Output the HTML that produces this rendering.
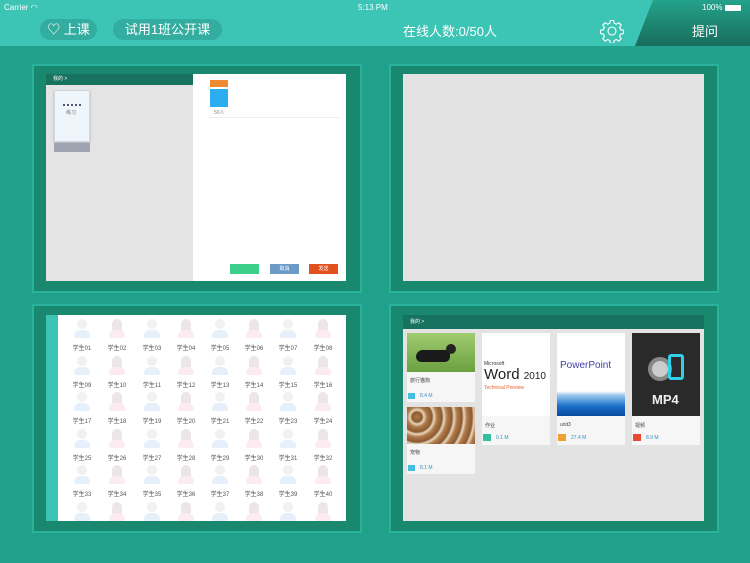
<!DOCTYPE html>
<html><head><meta charset="utf-8"><style>
*{margin:0;padding:0;box-sizing:border-box}
body{width:750px;height:563px;overflow:hidden;background:#21a08c;font-family:"Liberation Sans","Noto Sans CJK SC",sans-serif;position:relative}
.hdr{position:absolute;left:0;top:0;width:750px;height:46px;background:#3cc4b4;color:#fff}
.abs{position:absolute}
.pill{position:absolute;background:#33ad9f;border-radius:11px;height:21px;top:19px;color:#fff;font-size:13px;line-height:21px;text-align:center}
.card{position:absolute;width:330px;height:229px;background:#19886f;border:2px solid #2ab39c}
.av{position:absolute;width:20px;height:26px}
.av .h{position:absolute;left:5px;top:2px;width:10px;height:10px;border-radius:5px;background:#f1f1f1}
.av .b{position:absolute;left:2px;top:13px;width:16px;height:8px;border-radius:6px 6px 2px 2px}
.lb{position:absolute;font-size:6px;color:#555;width:30px;text-align:center}
.fc{position:absolute;background:#f6f6f6}
.sz{position:absolute;font-size:5px;color:#3a8fc0}
.t{position:absolute;font-size:5px;color:#444}
</style></head><body>
<div class="hdr">
 <div class="abs" style="left:4px;top:3px;font-size:8px">Carrier ︎◠</div>
 <div class="abs" style="left:358px;top:3px;font-size:8px">5:13 PM</div>
 <div class="abs" style="left:635px;top:0;width:115px;height:46px;background:linear-gradient(#24a28b,#176d5d);clip-path:polygon(18px 0,100% 0,100% 100%,0 100%)"></div>
 <div class="abs" style="left:702px;top:3px;font-size:8px">100% <span style="display:inline-block;width:16px;height:6px;background:#fff;border-radius:1px;vertical-align:middle"></span></div>
 <div class="pill" style="left:40px;width:57px">&#9825; 上课</div>
 <div class="pill" style="left:113px;width:109px">试用1班公开课</div>
 <div class="abs" style="left:380px;top:21px;width:140px;text-align:center;font-size:13px">在线人数:0/50人</div>
 <svg class="abs" style="left:600px;top:19px" width="24" height="24" viewBox="0 0 24 24" fill="none" stroke="#fff" stroke-width="1.1"><path d="M10.3 1.5h3.4l.5 2.8 2.3 1 2.3-1.6 2.4 2.4-1.6 2.3 1 2.3 2.8.5v3.4l-2.8.5-1 2.3 1.6 2.3-2.4 2.4-2.3-1.6-2.3 1-.5 2.8h-3.4l-.5-2.8-2.3-1-2.3 1.6-2.4-2.4 1.6-2.3-1-2.3-2.8-.5v-3.4l2.8-.5 1-2.3-1.6-2.3 2.4-2.4 2.3 1.6 2.3-1z"/><circle cx="12" cy="12" r="4"/></svg>
 <div class="abs" style="left:692px;top:21px;font-size:13px">提问</div>
</div>

<div class="card" style="left:32px;top:64px"></div>
<div class="card" style="left:389px;top:64px"></div>
<div class="card" style="left:32px;top:304px"></div>
<div class="card" style="left:389px;top:304px"></div>

<!-- panel 1 -->
<div class="abs" style="left:46px;top:74px;width:147px;height:207px;background:#e4e4e4"></div>
<div class="abs" style="left:46px;top:74px;width:147px;height:11px;background:#17735f;color:#fff;font-size:5px;line-height:11px;padding-left:7px">我的 &gt;</div>
<div class="abs" style="left:54px;top:90px;width:36px;height:52px;background:#eef5fb;border:1px solid #cfd8e0;box-shadow:0 1px 2px #aaa"></div>
<div class="abs" style="left:63px;top:104px;width:18px;height:2px;border-top:2px dotted #557"></div>
<div class="t" style="left:66px;top:109px;color:#777">练习</div>
<div class="abs" style="left:54px;top:143px;width:36px;height:9px;background:#a0a4b0"></div>
<div class="abs" style="left:193px;top:74px;width:153px;height:207px;background:#fff"></div>
<div class="abs" style="left:210px;top:80px;width:18px;height:7px;background:#f08a30"></div>
<div class="abs" style="left:210px;top:89px;width:18px;height:18px;background:#2aaef0"></div>
<div class="t" style="left:214px;top:109px;color:#888">50人</div>
<div class="abs" style="left:208px;top:117px;width:132px;height:1px;background:#eee"></div>
<div class="abs" style="left:230px;top:264px;width:29px;height:10px;background:#3ccf8c"></div>
<div class="abs" style="left:270px;top:264px;width:29px;height:10px;background:#6d9bc8;color:#fff;font-size:5px;text-align:center;line-height:10px">取消</div>
<div class="abs" style="left:309px;top:264px;width:29px;height:10px;background:#e2521e;color:#fff;font-size:5px;text-align:center;line-height:10px">发送</div>

<!-- panel 2 -->
<div class="abs" style="left:403px;top:74px;width:301px;height:207px;background:#e3e3e3"></div>

<!-- panel 3 -->
<div class="abs" style="left:46px;top:315px;width:300px;height:206px;background:#fff"></div>
<div class="abs" style="left:46px;top:315px;width:12px;height:206px;background:#3cc4b4"></div>
<div id="grid"></div>

<!-- panel 4 -->
<div class="abs" style="left:403px;top:315px;width:301px;height:206px;background:#e3e3e3"></div>
<div class="abs" style="left:403px;top:315px;width:301px;height:14px;background:#17735f;color:#fff;font-size:5px;line-height:14px;padding-left:7px">我的 &gt;</div>
<div class="fc" style="left:407px;top:333px;width:68px;height:69px"></div>
<div class="abs" style="left:407px;top:333px;width:68px;height:39px;background:linear-gradient(#a0cc70,#6aa040)"></div>
<div class="abs" style="left:416px;top:350px;width:34px;height:12px;background:#1a1a1a;border-radius:8px 4px 6px 6px"></div>
<div class="abs" style="left:446px;top:344px;width:10px;height:10px;background:#222;border-radius:5px"></div>
<div class="t" style="left:410px;top:377px">旅行猫狗</div>
<div class="abs" style="left:408px;top:393px;width:7px;height:6px;background:#44bde0"></div>
<div class="sz" style="left:420px;top:393px">8.4 M</div>
<div class="fc" style="left:407px;top:407px;width:68px;height:67px"></div>
<div class="abs" style="left:407px;top:407px;width:68px;height:37px;background:repeating-radial-gradient(circle at 10px 10px,#b07a4a 0,#8a5a30 5px,#e8d8c0 7px,#b07a4a 10px)"></div>
<div class="t" style="left:410px;top:449px">宠物</div>
<div class="abs" style="left:408px;top:465px;width:7px;height:6px;background:#44bde0"></div>
<div class="sz" style="left:420px;top:465px">8.1 M</div>

<div class="fc" style="left:482px;top:333px;width:68px;height:112px"></div>
<div class="abs" style="left:482px;top:333px;width:68px;height:83px;background:#fff"></div>
<div class="abs" style="left:484px;top:361px;font-size:5px;color:#333">Microsoft</div>
<div class="abs" style="left:484px;top:366px;font-size:15px;color:#222;white-space:nowrap">Word <span style="font-size:10px">2010</span></div>
<div class="abs" style="left:484px;top:385px;font-size:5px;color:#e86030">Technical Preview</div>
<div class="t" style="left:485px;top:422px">作业</div>
<div class="abs" style="left:483px;top:434px;width:8px;height:7px;background:#30c0a0"></div>
<div class="sz" style="left:496px;top:435px">0.1 M</div>

<div class="fc" style="left:557px;top:333px;width:68px;height:112px"></div>
<div class="abs" style="left:557px;top:333px;width:68px;height:83px;background:linear-gradient(#fff 70%,#9ac8ee 75%,#1a70c8 88%,#0a4aa0)"></div>
<div class="abs" style="left:560px;top:360px;font-size:10px;color:#4040a8">PowerPoint</div>
<div class="t" style="left:560px;top:422px">unit3</div>
<div class="abs" style="left:558px;top:434px;width:8px;height:7px;background:#f0a030"></div>
<div class="sz" style="left:571px;top:435px">27.4 M</div>

<div class="fc" style="left:632px;top:333px;width:68px;height:112px"></div>
<div class="abs" style="left:632px;top:333px;width:68px;height:83px;background:#2a2a2a"></div>
<div class="abs" style="left:648px;top:357px;width:24px;height:24px;border-radius:12px;background:#ccc;border:4px solid #888"></div>
<div class="abs" style="left:668px;top:354px;width:16px;height:26px;border:3px solid #30d0e8;border-radius:3px"></div>
<div class="abs" style="left:652px;top:392px;font-size:13px;font-weight:bold;color:#eee">MP4</div>
<div class="t" style="left:635px;top:422px">视频</div>
<div class="abs" style="left:633px;top:434px;width:8px;height:7px;background:#e84a30"></div>
<div class="sz" style="left:646px;top:435px">8.9 M</div>

<script>
var g='',xs=[82,117,152,186,220,254,288,323],ys=[330,367,403,440,476,513],n=1;
for(var r=0;r<6;r++)for(var c=0;c<8;c++){
 var boy=c%2==0,x=xs[c],y=ys[r];
 g+='<div class="av" style="left:'+(x-10)+'px;top:'+(y-13)+'px"><div class="h"'+(boy?'':' style="background:#ece6e6;height:13px;border-radius:5px 5px 2px 2px"')+'></div><div class="b" style="background:'+(boy?'#e6f0fa':'#fcebf0')+'"></div></div>';
 if(r<5){g+='<div class="lb" style="left:'+(x-15)+'px;top:'+(y+13)+'px">学生'+(n<10?'0'+n:n)+'</div>';}
 n++;
}
var d=document.getElementById('grid');d.outerHTML=g+'<div class="abs" style="left:46px;top:521px;width:300px;height:10px;background:#19886f"></div>';
</script>
</body></html>
